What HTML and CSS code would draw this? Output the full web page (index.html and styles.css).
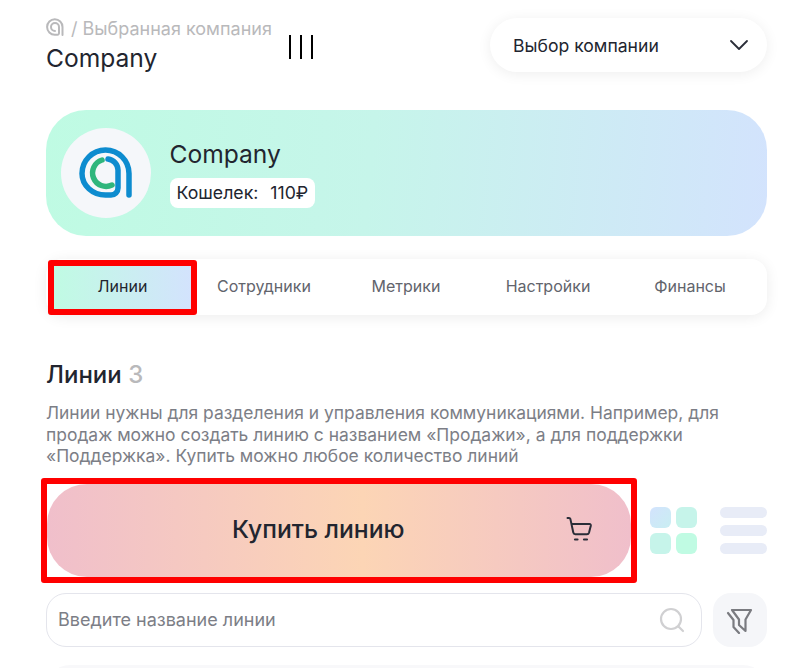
FILE: index.html
```html
<!DOCTYPE html>
<html lang="ru">
<head>
  <meta charset="UTF-8" />
  <meta name="viewport" content="width=device-width, initial-scale=1.0"/>
  <title>Company</title>
  <link rel="stylesheet" href="styles.css">
</head>
<body>

  <header class="top">
    <div class="top-left">
      <div class="crumbs">
        <svg class="crumb-logo" viewBox="0 0 18 18" fill="none" stroke="#b9b9bb" stroke-width="2" stroke-linecap="round">
          <path d="M16.500 17V9A7.700 7.700 0 1 0 8.800 16.700H11.500A1.500 1.500 0 0 0 13 15V9A4 4 0 1 0 9 13"/>
        </svg>
        <span>/ Выбранная компания</span>
      </div>
      <div class="top-title">Company</div>
    </div>
    <div class="burger"><i></i><i></i><i></i></div>
    <div class="company-select">
      <span>Выбор компании</span>
      <svg width="20" height="12" viewBox="0 0 20 12" fill="none" stroke="#2a2d38" stroke-width="1.800" stroke-linecap="round" stroke-linejoin="round">
        <path d="M2 2l8 8 8-8"/>
      </svg>
    </div>
  </header>

  <section class="hero">
    <div class="avatar">
      <svg width="90" height="90" viewBox="0 0 90 90" fill="none" stroke-width="5.500" stroke-linecap="round">
        <path stroke="#0d8ccf" d="M68 67V45.500A23.500 23.500 0 0 0 21 45.500A23.500 21.500 0 0 0 44.500 67H50A7 7 0 0 0 57 60V42A11.500 11.500 0 0 0 47 31"/>
        <path stroke="#2fb67c" d="M41 32A13.500 13.500 0 1 0 51 57"/>
      </svg>
    </div>
    <div class="hero-info">
      <div class="hero-name">Company</div>
      <div class="wallet"><span>Кошелек:</span><span>110₽</span></div>
    </div>
  </section>

  <nav class="tabs">
    <div class="tab-mark"><div class="tab tab-active">Линии</div></div>
    <div class="tab">Сотрудники</div>
    <div class="tab">Метрики</div>
    <div class="tab">Настройки</div>
    <div class="tab">Финансы</div>
  </nav>

  <h2 class="lines-title">Линии <span>3</span></h2>
  <p class="lines-text">Линии нужны для разделения и управления коммуникациями. Например, для продаж можно создать линию с названием «Продажи», а для поддержки «Поддержка». Купить можно любое количество линий</p>

  <div class="buy-row">
    <div class="buy-mark">
      <button class="buy-btn">
        <span>Купить линию</span>
        <svg class="cart" width="28" height="28" viewBox="0 0 28 28" fill="none" stroke="#2a2d38" stroke-width="2" stroke-linecap="round" stroke-linejoin="round">
          <path d="M1.500 3H3c.7 0 1.200.4 1.400 1.100L7.300 17.500c.2 1 1 1.700 2 1.700H21c1 0 1.700-.6 2-1.500L24.800 10.700c.2-1-.3-1.700-1.300-1.700H5.500"/>
          <path d="M9 24.500h2.500M18 24.500h3" stroke-width="2.200"/>
        </svg>
      </button>
    </div>
    <div class="view-grid"><i class="c1"></i><i class="c2"></i><i class="c2"></i><i class="c3"></i></div>
    <div class="view-list"><i></i><i></i><i></i></div>
  </div>

  <div class="search-row">
    <div class="search">
      <span>Введите название линии</span>
      <svg width="26" height="26" viewBox="0 0 26 26" fill="none" stroke="#d0d0d2" stroke-width="2.200" stroke-linecap="round">
        <circle cx="12" cy="12" r="10"/>
        <path d="M19.500 19.500l4.500 4.500"/>
      </svg>
    </div>
    <div class="filter">
      <svg width="28" height="28" viewBox="0 0 28 28" fill="none" stroke="#7a7b80" stroke-width="2.200" stroke-linejoin="round" stroke-linecap="round">
        <path d="M6 4H25L19.500 13.500V25L13 19V13.500Z"/>
        <path d="M2 7L7.500 14V21L13 27"/>
      </svg>
    </div>
  </div>

  <div class="line-card"></div>

</body>
</html>
```

FILE: styles.css
```css
html, body {
  height: 668px;
  overflow: hidden;
}
body {
  margin: 0;
  padding: 0 30px 0 46px;
  font-family: Inter, 'Noto Sans', sans-serif;
  color: #22252f;
  background-color: #fff;
}
.top {
  display: flex;
  align-items: flex-start;
  height: 110px;
}
.top-left {
  width: 243px;
  padding-top: 18px;
}
.crumbs {
  display: flex;
  align-items: center;
  gap: 7px;
  font-size: 18px;
  line-height: 21px;
  color: #b9b9bb;
}
.crumb-logo {
  width: 18px;
  height: 18px;
  margin-top: -3px;
}
.top-title {
  font-size: 24.600px;
  line-height: 30px;
  margin-top: 4px;
}
.burger {
  display: flex;
  gap: 9px;
  margin-top: 35px;
}
.burger i {
  width: 2px;
  height: 24px;
  background: #000;
}
.company-select {
  display: flex;
  align-items: center;
  justify-content: space-between;
  box-sizing: border-box;
  width: 277px;
  height: 54px;
  margin: 18px 0 0 auto;
  padding: 0 18px 0 23px;
  border-radius: 27px;
  background: #fff;
  box-shadow: 0 2px 14px rgba(0,0,0,0.07);
  font-size: 17.600px;
}
.hero {
  display: flex;
  align-items: center;
  gap: 18.500px;
  height: 126px;
  padding-left: 15px;
  border-radius: 40px;
  background: linear-gradient(95deg, #bffbe3 0%, #c6f5ea 45%, #d3e3fd 100%);
}
.avatar {
  width: 90px;
  height: 90px;
  border-radius: 50%;
  background: #f5f7fa;
}
.hero-info {
  padding-top: 1px;
}
.hero-name {
  font-size: 24.600px;
  line-height: 30px;
}
.wallet {
  display: inline-flex;
  gap: 12px;
  margin-top: 9px;
  padding: 0 7px;
  border-radius: 8px;
  background: #fff;
  font-size: 17.700px;
  line-height: 30px;
}
.tabs {
  display: flex;
  align-items: center;
  height: 56px;
  margin-top: 23px;
  padding: 0 6px 0 2px;
  border-radius: 16px;
  background: #fff;
  box-shadow: 0 2px 14px rgba(0,0,0,0.08);
}
.tab-mark {
  flex: none;
  border: 6px solid #f00;
  border-radius: 3px;
  margin: 1px -4px 0 0;
}
.tab {
  flex: 1;
  padding-bottom: 3px;
  text-align: center;
  font-size: 16px;
  line-height: 40px;
  color: #62646c;
}
.tab-active {
  width: 137px;
  color: #22252f;
  background: linear-gradient(90deg, #c0fbe3, #d3e3fd);
}
.lines-title {
  margin: 45px 0 0;
  font-size: 24px;
  font-weight: 500;
  line-height: 30px;
}
.lines-title span {
  color: #b9b9bb;
}
.lines-text {
  margin: 12px 0 0;
  font-size: 17.450px;
  line-height: 21.500px;
  color: #7c7e86;
}
.buy-row {
  display: flex;
  align-items: center;
  margin: 11px 0 0 -5px;
}
.buy-mark {
  border: 6px solid #f00;
  border-radius: 3px;
}
.buy-btn {
  display: flex;
  align-items: center;
  justify-content: space-between;
  box-sizing: border-box;
  width: 584px;
  height: 93px;
  padding: 0 37px 2px 185px;
  border: 0;
  border-radius: 40px;
  background: linear-gradient(90deg, #f0bfcb 0%, #fcd5b5 54%, #f0bfcb 100%);
  font-family: inherit;
  font-size: 24.700px;
  font-weight: 500;
  color: #22252f;
}
.view-grid {
  display: grid;
  grid-template-columns: 21px 21px;
  gap: 5px;
  margin-left: 13px;
}
.view-grid i {
  height: 21px;
  border-radius: 6px;
}
.view-grid .c1 { background: linear-gradient(135deg, #d3e3fd, #c9eef2); }
.view-grid .c2 { background: #c6f4ea; }
.view-grid .c3 { background: #c0fbe3; }
.view-list {
  display: flex;
  flex-direction: column;
  gap: 7px;
  width: 47px;
  margin-left: 23px;
}
.view-list i {
  height: 11px;
  border-radius: 6px;
  background: #e8ecf7;
}
.search-row {
  display: flex;
  gap: 11px;
  margin-top: 10px;
}
.search {
  flex: 1;
  display: flex;
  align-items: center;
  justify-content: space-between;
  box-sizing: border-box;
  height: 54px;
  padding: 0 16px 0 11px;
  border: 1px solid #e4e5ec;
  border-radius: 20px;
  font-size: 18px;
  color: #7c7e86;
}
.filter {
  display: flex;
  align-items: center;
  justify-content: center;
  width: 54px;
  height: 54px;
  border-radius: 18px;
  background: #f5f6f9;
}
.line-card {
  height: 120px;
  margin-top: 18px;
  border-radius: 24px;
  background: #f8f8fa;
}
```
